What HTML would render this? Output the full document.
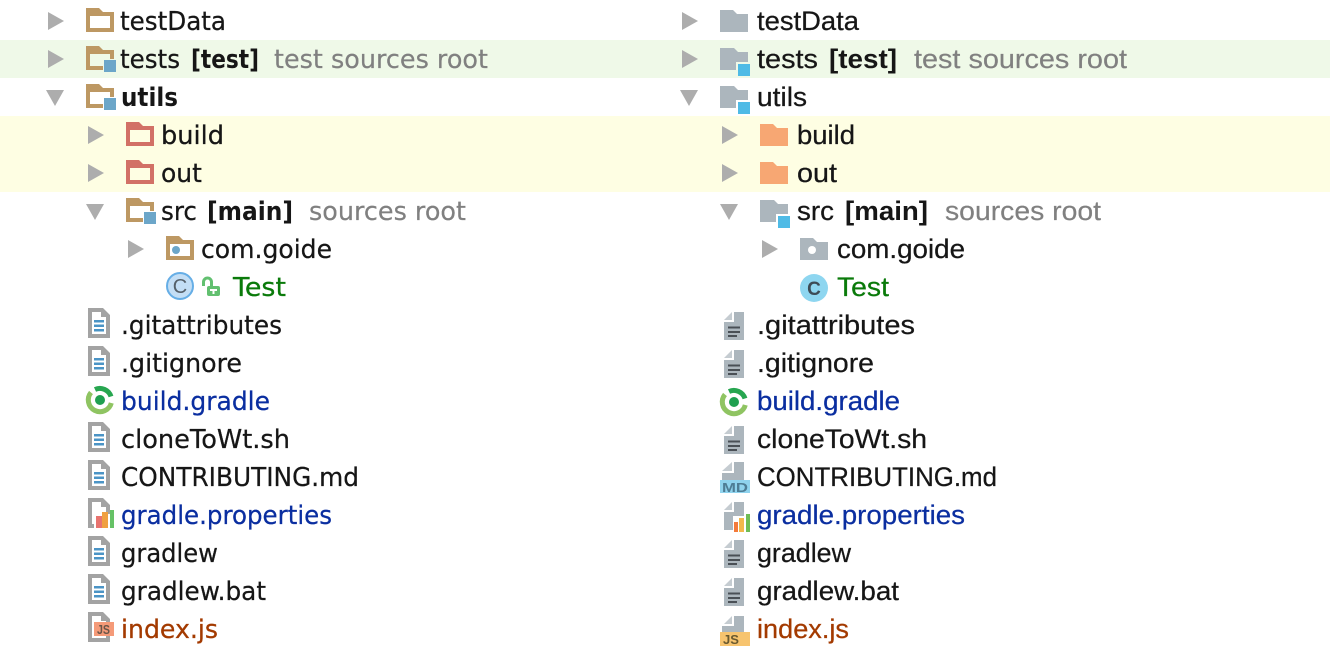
<!DOCTYPE html>
<html><head><meta charset="utf-8">
<style>
html,body{margin:0;padding:0;background:#fff;width:1330px;height:650px;overflow:hidden}
svg{display:block}
text{white-space:pre}
.l{font-family:"DejaVu Sans","Liberation Sans",sans-serif;font-size:26px}
.r{font-family:"Liberation Sans","DejaVu Sans",sans-serif;font-size:27px}
.b{font-weight:bold}
.k{fill:#161616;stroke:#161616;stroke-width:.25}
.g{fill:#808080;stroke:#808080;stroke-width:.2}
.bl{fill:#0a2ea0;stroke:#0a2ea0;stroke-width:.25}
.gr{fill:#0a7a0a;stroke:#0a7a0a;stroke-width:.25}
.br{fill:#a33a00;stroke:#a33a00;stroke-width:.25}
.b{stroke-width:0}
</style></head><body>
<svg width="1330" height="650" viewBox="0 0 1330 650" xmlns="http://www.w3.org/2000/svg">
<defs>
<path id="ar" d="M0,0 L16,9 L0,18Z" fill="#adadad"/>
<path id="ad" d="M0,0 H18 L9,16Z" fill="#adadad"/>
<path id="fo" fill-rule="evenodd" d="M0,0 H13 L17,4 H28 V24 H0Z M4,8 V20 H24 V8Z"/>
<g id="fb">
<path fill="#bd9863" fill-rule="evenodd" d="M0,0 H13 L17,4 H28 V13 H17 V24 H0Z M4,8 V20 H17 V13 H24 V8Z"/>
<rect x="18" y="14" width="12" height="12" fill="#6ca6c9"/>
</g>
<path id="rf" fill="#acb6bd" d="M0,0 H13 L17,4 H28 V22 H0Z"/>
<g id="rb">
<path fill="#acb6bd" d="M0,0 H14 L18,4 H28 V14 H16 V22 H0Z"/>
<rect x="18" y="16" width="12" height="12" fill="#4fbbe6"/>
</g>
<g id="lf">
<path fill="#a3a3a3" fill-rule="evenodd" d="M0,0 H15 L22,7 V30 H0Z M4,4 V26 H18 V9 H13 V4Z"/>
<rect x="6" y="12" width="10" height="2.500" fill="#4b94c6"/>
<rect x="6" y="16.500" width="10" height="2.500" fill="#4b94c6"/>
<rect x="6" y="21" width="10" height="2.500" fill="#4b94c6"/>
</g>
<g id="rfile">
<path fill="#acb6bd" d="M10,0 H20 V28 H0 V10 H10Z"/>
<path fill="#c5ccd1" d="M8,0 V8 H0Z"/>
<rect x="4" y="14.500" width="12" height="2" fill="#4a5056"/>
<rect x="4" y="19" width="12" height="2" fill="#4a5056"/>
<rect x="4" y="23" width="9" height="2" fill="#4a5056"/>
</g>
<g id="gri">
<path d="M11.300,3 A11.700,11.700 0 1 1 -9,-7.500" fill="none" stroke="#8fc462" stroke-width="5"/>
<path d="M-5,-10.500 A11.700,11.700 0 0 1 11,-3.500" fill="none" stroke="#27a650" stroke-width="5"/>
<circle r="5" fill="#1fa050"/>
</g>
</defs>

<rect x="0" y="40" width="1330" height="38" fill="#eff9e8"/>
<rect x="0" y="116" width="1330" height="76" fill="#fefee3"/>

<!-- LEFT arrows -->
<use href="#ar" x="48" y="12"/><use href="#ar" x="48" y="50"/><use href="#ad" x="46" y="90"/>
<use href="#ar" x="88" y="126"/><use href="#ar" x="88" y="164"/><use href="#ad" x="86" y="204"/>
<use href="#ar" x="128" y="240"/>

<!-- LEFT folders -->
<use href="#fo" x="86" y="8" fill="#bd9863"/>
<use href="#fb" x="86" y="46"/>
<use href="#fb" x="86" y="84"/>
<use href="#fo" x="126" y="122" fill="#d27166"/>
<use href="#fo" x="126" y="160" fill="#d27166"/>
<use href="#fb" x="126" y="198"/>
<use href="#fo" x="166" y="236" fill="#bd9863"/>
<circle cx="176" cy="250" r="4" fill="#6ca6c9"/>

<!-- LEFT class + lock -->
<circle cx="180" cy="286" r="13" fill="#c3def5" stroke="#66aee6" stroke-width="2"/>
<text x="180" y="293" text-anchor="middle" font-family="Liberation Sans,sans-serif" font-size="20" fill="#55606a">C</text>
<path d="M203.500,286 V282 A4,4 0 0 1 211.500,282 V287" fill="none" stroke="#62c070" stroke-width="3"/>
<rect x="207" y="286" width="13" height="10" rx="2" fill="#62c070"/>
<rect x="210" y="289" width="7" height="2" fill="#fff"/><rect x="212.500" y="290" width="2" height="4" fill="#fff"/>

<!-- LEFT files -->
<use href="#lf" x="88" y="308"/>
<use href="#lf" x="88" y="346"/>
<use href="#gri" x="100" y="400"/>
<use href="#lf" x="88" y="422"/>
<use href="#lf" x="88" y="460"/>
<path fill="#a3a3a3" fill-rule="evenodd" d="M88,498 H103 L110,505 V528 H88Z M92,502 V524 H106 V507 H101 V502Z"/>
<rect x="94" y="514" width="21" height="15" fill="#fff"/>
<rect x="96" y="516" width="6" height="12" fill="#e8736f"/>
<rect x="102" y="512" width="6" height="16" fill="#f0a040"/>
<rect x="110" y="510" width="4" height="18" fill="#66c266"/>
<use href="#lf" x="88" y="536"/>
<use href="#lf" x="88" y="574"/>
<path fill="#a3a3a3" fill-rule="evenodd" d="M88,612 H103 L110,619 V642 H88Z M92,616 V638 H106 V621 H101 V616Z"/>
<rect x="94" y="622" width="20" height="14" fill="#f59a78"/>
<text x="97" y="634" font-family="Liberation Sans,sans-serif" font-weight="bold" font-size="13" fill="#6a5548" textLength="13" lengthAdjust="spacingAndGlyphs">JS</text>

<!-- LEFT text -->
<text class="l k" x="120" y="30" textLength="106" lengthAdjust="spacingAndGlyphs">testData</text>
<text class="l k" x="120" y="68" textLength="60" lengthAdjust="spacingAndGlyphs">tests</text>
<text class="l k b" x="191" y="68" textLength="68" lengthAdjust="spacingAndGlyphs">[test]</text>
<text class="l g" x="274" y="68" textLength="214" lengthAdjust="spacingAndGlyphs">test sources root</text>
<text class="l k b" x="121" y="106" textLength="57" lengthAdjust="spacingAndGlyphs">utils</text>
<text class="l k" x="161" y="144" textLength="63" lengthAdjust="spacingAndGlyphs">build</text>
<text class="l k" x="161" y="182" textLength="41" lengthAdjust="spacingAndGlyphs">out</text>
<text class="l k" x="161" y="220" textLength="36" lengthAdjust="spacingAndGlyphs">src</text>
<text class="l k b" x="207" y="220" textLength="86" lengthAdjust="spacingAndGlyphs">[main]</text>
<text class="l g" x="309" y="220" textLength="157" lengthAdjust="spacingAndGlyphs">sources root</text>
<text class="l k" x="201" y="258" textLength="131" lengthAdjust="spacingAndGlyphs">com.goide</text>
<text class="l gr" x="233" y="296" textLength="53" lengthAdjust="spacingAndGlyphs">Test</text>
<text class="l k" x="121" y="334" textLength="161" lengthAdjust="spacingAndGlyphs">.gitattributes</text>
<text class="l k" x="121" y="372" textLength="121" lengthAdjust="spacingAndGlyphs">.gitignore</text>
<text class="l bl" x="121" y="410" textLength="149" lengthAdjust="spacingAndGlyphs">build.gradle</text>
<text class="l k" x="121" y="448" textLength="169" lengthAdjust="spacingAndGlyphs">cloneToWt.sh</text>
<text class="l k" x="121" y="486" textLength="238" lengthAdjust="spacingAndGlyphs">CONTRIBUTING.md</text>
<text class="l bl" x="121" y="524" textLength="211" lengthAdjust="spacingAndGlyphs">gradle.properties</text>
<text class="l k" x="121" y="562" textLength="97" lengthAdjust="spacingAndGlyphs">gradlew</text>
<text class="l k" x="121" y="600" textLength="145" lengthAdjust="spacingAndGlyphs">gradlew.bat</text>
<text class="l br" x="121" y="638" textLength="97" lengthAdjust="spacingAndGlyphs">index.js</text>

<!-- RIGHT arrows -->
<use href="#ar" x="682" y="12"/><use href="#ar" x="682" y="50"/><use href="#ad" x="680" y="90"/>
<use href="#ar" x="722" y="126"/><use href="#ar" x="722" y="164"/><use href="#ad" x="720" y="204"/>
<use href="#ar" x="762" y="240"/>

<!-- RIGHT folders -->
<use href="#rf" x="720" y="10"/>
<use href="#rb" x="720" y="48"/>
<use href="#rb" x="720" y="86"/>
<path fill="#f7a773" d="M760,124 H773 L777,128 H788 V146 H760Z"/>
<path fill="#f7a773" d="M760,162 H773 L777,166 H788 V184 H760Z"/>
<use href="#rb" x="760" y="200"/>
<path fill="#acb6bd" d="M800,238 H813 L817,242 H828 V260 H800Z"/>
<circle cx="812" cy="250" r="4" fill="#fff"/>

<!-- RIGHT class -->
<circle cx="814" cy="288" r="14" fill="#8ed6f0"/>
<text x="814" y="295" text-anchor="middle" font-family="Liberation Sans,sans-serif" font-weight="bold" font-size="19" fill="#3d4b55">C</text>

<!-- RIGHT files -->
<use href="#rfile" x="724" y="312"/>
<use href="#rfile" x="724" y="350"/>
<use href="#gri" x="734" y="402"/>
<use href="#rfile" x="724" y="426"/>
<path fill="#acb6bd" d="M734,462 H744 V480 H722 V473 H734Z"/>
<path fill="#c5ccd1" d="M732,462 V471 H722Z"/>
<rect x="720" y="480" width="30" height="13" fill="#8fd3ee"/>
<text x="722" y="492" font-family="Liberation Sans,sans-serif" font-weight="bold" font-size="13" fill="#4e7d95" textLength="26" lengthAdjust="spacingAndGlyphs">MD</text>
<path fill="#acb6bd" d="M734,502 H744 V516 H733 V530 H724 V512 H734Z"/>
<path fill="#c5ccd1" d="M732,502 V510 H724Z"/>
<rect x="734" y="522" width="4" height="10" fill="#f47a3a"/>
<rect x="739" y="518" width="5" height="14" fill="#f2b84c"/>
<rect x="746" y="514" width="4" height="18" fill="#6fbd55"/>
<use href="#rfile" x="724" y="540"/>
<use href="#rfile" x="724" y="578"/>
<path fill="#acb6bd" d="M734,616 H744 V632 H722 V626 H734Z"/>
<path fill="#c5ccd1" d="M732,616 V624 H724Z"/>
<rect x="720" y="632" width="30" height="14" fill="#f7c46f"/>
<text x="723" y="644" font-family="Liberation Sans,sans-serif" font-weight="bold" font-size="13" fill="#6a5a30">JS</text>

<!-- RIGHT text -->
<text class="r k" x="757" y="30" textLength="102" lengthAdjust="spacingAndGlyphs">testData</text>
<text class="r k" x="757" y="68" textLength="61" lengthAdjust="spacingAndGlyphs">tests</text>
<text class="r k b" x="829" y="68" textLength="68" lengthAdjust="spacingAndGlyphs">[test]</text>
<text class="r g" x="914" y="68" textLength="213" lengthAdjust="spacingAndGlyphs">test sources root</text>
<text class="r k" x="757" y="106" textLength="50" lengthAdjust="spacingAndGlyphs">utils</text>
<text class="r k" x="797" y="144" textLength="58" lengthAdjust="spacingAndGlyphs">build</text>
<text class="r k" x="797" y="182" textLength="40" lengthAdjust="spacingAndGlyphs">out</text>
<text class="r k" x="797" y="220" textLength="37" lengthAdjust="spacingAndGlyphs">src</text>
<text class="r k b" x="845" y="220" textLength="83" lengthAdjust="spacingAndGlyphs">[main]</text>
<text class="r g" x="945" y="220" textLength="156" lengthAdjust="spacingAndGlyphs">sources root</text>
<text class="r k" x="837" y="258" textLength="128" lengthAdjust="spacingAndGlyphs">com.goide</text>
<text class="r gr" x="837" y="296" textLength="52" lengthAdjust="spacingAndGlyphs">Test</text>
<text class="r k" x="757" y="334" textLength="158" lengthAdjust="spacingAndGlyphs">.gitattributes</text>
<text class="r k" x="757" y="372" textLength="117" lengthAdjust="spacingAndGlyphs">.gitignore</text>
<text class="r bl" x="757" y="410" textLength="143" lengthAdjust="spacingAndGlyphs">build.gradle</text>
<text class="r k" x="757" y="448" textLength="170" lengthAdjust="spacingAndGlyphs">cloneToWt.sh</text>
<text class="r k" x="757" y="486" textLength="240" lengthAdjust="spacingAndGlyphs">CONTRIBUTING.md</text>
<text class="r bl" x="757" y="524" textLength="208" lengthAdjust="spacingAndGlyphs">gradle.properties</text>
<text class="r k" x="757" y="562" textLength="94" lengthAdjust="spacingAndGlyphs">gradlew</text>
<text class="r k" x="757" y="600" textLength="142" lengthAdjust="spacingAndGlyphs">gradlew.bat</text>
<text class="r br" x="757" y="638" textLength="92" lengthAdjust="spacingAndGlyphs">index.js</text>
</svg>
</body></html>
